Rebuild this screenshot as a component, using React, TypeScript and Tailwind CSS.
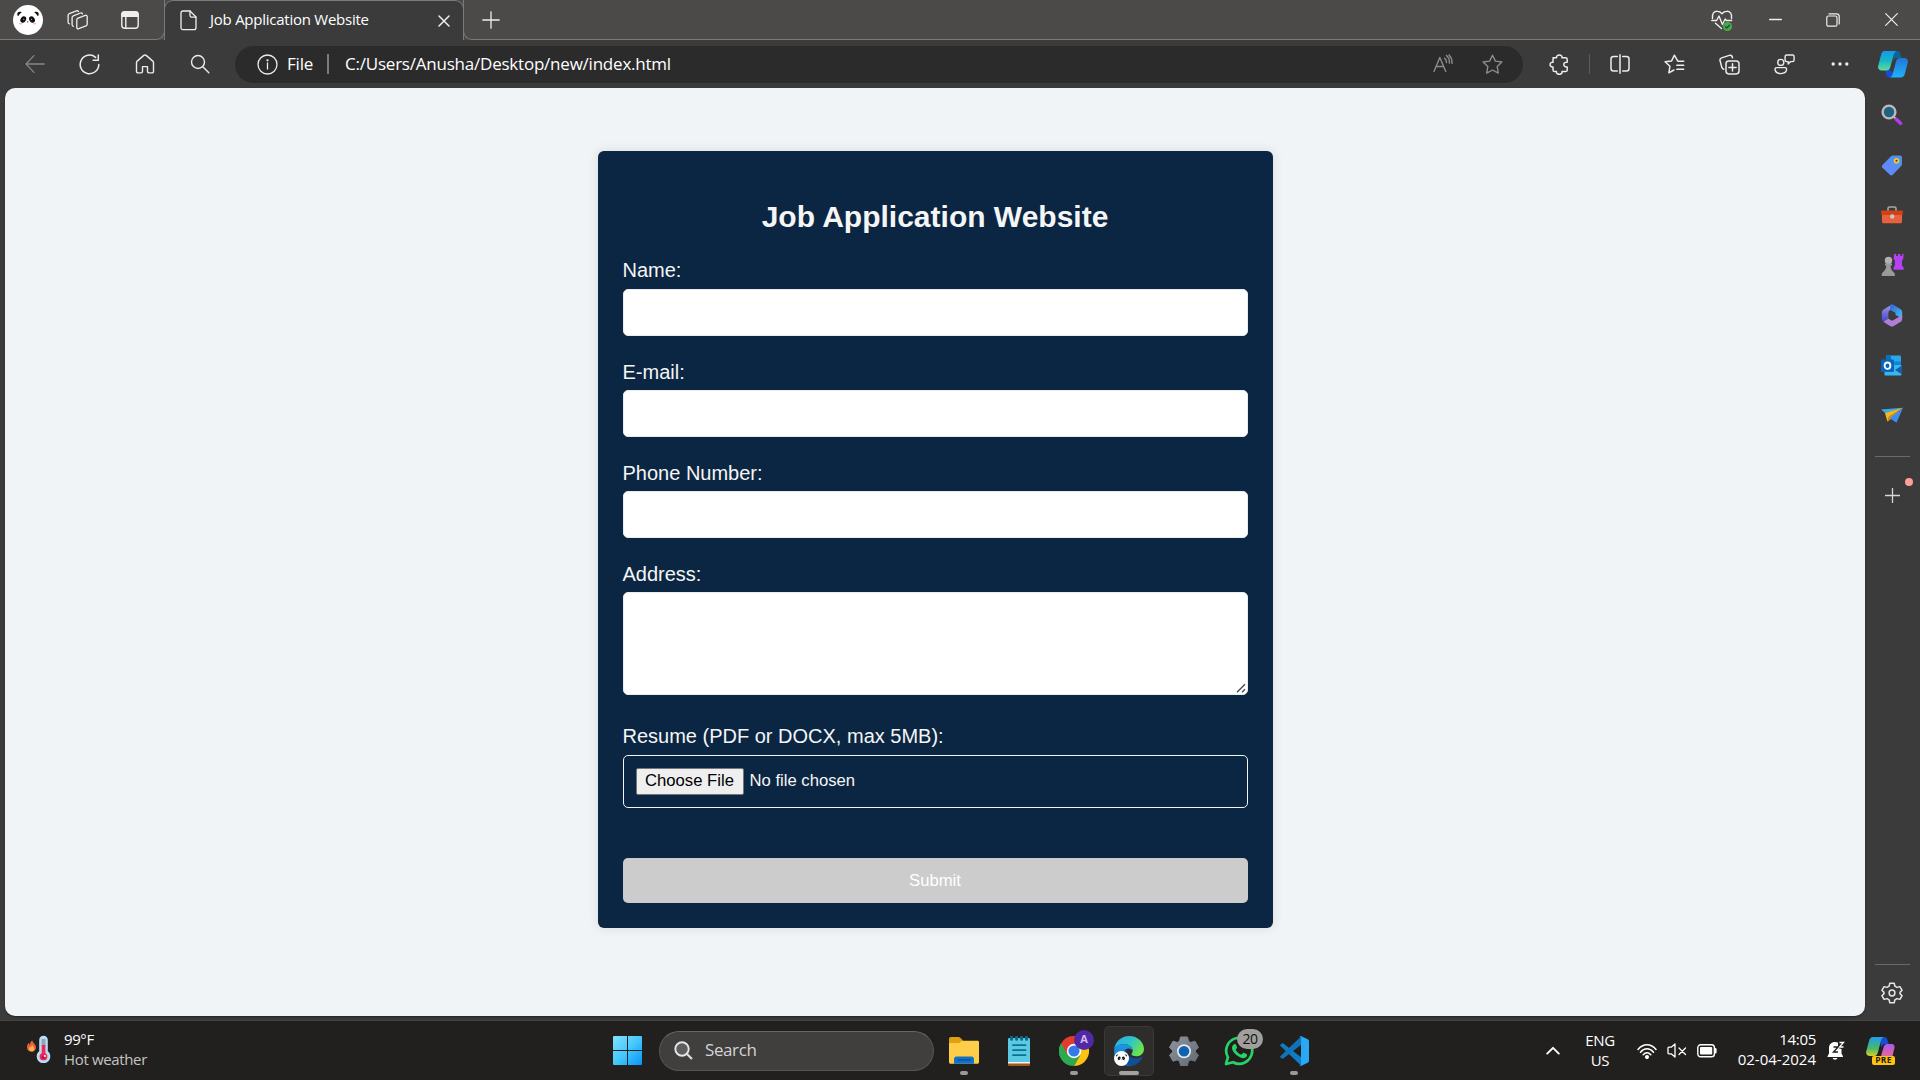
import React from "react";

type IconProps = {
  w?: number;
  h?: number;
  className?: string;
  sw?: number;
  children: React.ReactNode;
};

function Icon({ w = 20, h = 20, className = "", sw = 1.3, children }: IconProps) {
  return (
    <svg
      width={w}
      height={h}
      viewBox={`0 0 ${w} ${h}`}
      fill="none"
      stroke="currentColor"
      strokeWidth={sw}
      strokeLinecap="round"
      strokeLinejoin="round"
      className={`shrink-0 ${className}`}
    >
      {children}
    </svg>
  );
}

function Panda({ size, className = "" }: { size: number; className?: string }) {
  return (
    <svg width={size} height={size} viewBox="0 0 30 30" className={`shrink-0 ${className}`}>
      <circle cx="15" cy="15" r="15" fill="#fff" />
      <path d="M4.500 10.500C3.500 7.800 5.500 6 8.800 7.200C7.500 8 6.300 9.200 5.500 11z" fill="#111" />
      <path d="M25.500 10.500C26.500 7.800 24.500 6 21.200 7.200C22.500 8 23.700 9.200 24.500 11z" fill="#111" />
      <ellipse cx="10.300" cy="14.500" rx="2.700" ry="3.400" transform="rotate(30 10.300 14.500)" fill="#111" />
      <ellipse cx="19" cy="14.500" rx="2.700" ry="3.400" transform="rotate(-30 19 14.500)" fill="#111" />
      <circle cx="10.800" cy="14.300" r="0.500" fill="#fff" />
      <circle cx="18.500" cy="14.300" r="0.500" fill="#fff" />
      <path d="M13.800 16.600h1.800l-.9 1.100z" fill="#111" />
      <ellipse cx="7.800" cy="18.600" rx="1.700" ry="0.900" fill="#f9b4c3" />
      <ellipse cx="21.600" cy="18.600" rx="1.700" ry="0.900" fill="#f9b4c3" />
    </svg>
  );
}

function TitleBar() {
  return (
    <header className="flex h-10 shrink-0 bg-[#4b4a48] text-[#eeeeee]">
      <div className="flex h-10 w-[165px] shrink-0 items-center rounded-br-[9px] border-r border-b border-[#7c7a78] pl-[13px]">
        <Panda size={30} />
        <Icon w={22} h={22} className="ml-6">
          <path d="M10.500 9.300l7.800-2.900c1-.4 1.900.1 1.900 1.200v7.400c0 .9-.4 1.500-1.200 1.800l-7.300 2.900c-1 .4-1.900-.1-1.900-1.200V11c0-.9 0-1.400.7-1.700z" />
          <path d="M6.500 17.300c-.9 0-1.400-.6-1.400-1.500V8.600c0-.9.400-1.500 1.200-1.800L13.500 4c.9-.3 1.600 0 1.900.8" />
          <path d="M2.500 14.800c-.9 0-1.400-.6-1.400-1.500V6.400c0-.9.400-1.500 1.200-1.800L9.500 1.800c.9-.3 1.600 0 1.900.8" />
        </Icon>
        <Icon w={20} h={20} className="ml-[31px]" sw={1.400}>
          <rect x="1.800" y="1.800" width="16.400" height="16.400" rx="3" />
          <path d="M2 6.200V4.500C2 3 3 2 4.500 2h11C17 2 18 3 18 4.500v1.700z" fill="currentColor" />
          <path d="M5.800 6.500v11.500" />
        </Icon>
      </div>
      <div className="-ml-px flex h-[41px] w-[300px] shrink-0 items-center rounded-t-[9px] border-x border-t border-[#7c7a78] bg-[#3b3b3b] pl-[15px]">
        <Icon w={17} h={21} className="-mt-px">
          <path d="M3 1h7l6 6v10.500c0 1.400-.8 2.200-2 2.200H3c-1.200 0-2-.8-2-2V3c0-1.200.8-2 2-2z" />
          <path d="M10 1v4.500c0 1 .6 1.600 1.600 1.600H16" />
        </Icon>
        <span className="-mt-[3px] ml-[13px] w-[228px] text-[15px] tracking-[-0.25px] whitespace-nowrap text-white">Job Application Website</span>
        <Icon w={12} h={12} sw={1.500} className="-mt-px">
          <path d="M1 1l10 10M11 1L1 11" />
        </Icon>
      </div>
      <div className="-ml-px flex h-10 flex-1 items-center rounded-bl-[9px] border-b border-l border-[#7c7a78] pl-[18px]">
        <Icon w={18} h={18} sw={1.300}>
          <path d="M9 .8v16.400M.8 9h16.400" />
        </Icon>
        <div className="flex-1" />
        <Icon w={22} h={22} className="mr-[36px] mt-[2px]" sw={1.400}>
          <path d="M1.500 8.500C.5 3.500 3.500 1 6.300 1.200C8.500 1.300 10 2.500 11 3.700C12 2.500 13.500 1.300 15.700 1.200C18.500 1 21.500 3.500 20.500 8.500" />
          <path d="M.8 10.500h4.800l2.400-4.500 3.400 8.500 2.800-5.500 1.200 1.500h5.300M4.500 13.200l6 5.300" />
          <circle cx="16.500" cy="16.500" r="4.600" fill="#4aa84e" stroke="none" />
          <path d="M14.500 16.700l1.400 1.300 2.600-2.800" stroke="#2d4a2e" />
        </Icon>
        <Icon w={13} h={14} sw={1.300} className="mr-[44px]">
          <path d="M.6 6.500h11.800" />
        </Icon>
        <Icon w={14} h={14} sw={1.200} className="mr-[45px]">
          <rect x=".8" y="3" width="10.200" height="10.200" rx="1.500" />
          <path d="M3 .8h7.500c1.600 0 2.700 1.200 2.700 2.700V11" />
        </Icon>
        <Icon w={13} h={13} sw={1.200} className="mr-[22px]">
          <path d="M.7.7l11.600 11.600M12.300.7L.7 12.300" />
        </Icon>
      </div>
    </header>
  );
}

function ToolCell({ children }: { children: React.ReactNode }) {
  return <div className="flex w-[55px] shrink-0 justify-center">{children}</div>;
}

function Toolbar() {
  return (
    <div className="flex h-12 shrink-0 items-center bg-[#3b3b3b] text-[#ececec]">
      <div className="flex w-[235px] shrink-0 items-center pl-[7px]">
        <ToolCell>
          <Icon className="-mt-px text-[#868686]">
            <path d="M19.300 10H1M9 1.600L1 10l8 8.400" />
          </Icon>
        </ToolCell>
        <ToolCell>
          <Icon w={21} h={21} sw={1.500}>
            <path d="M19.800 10.500a9.300 9.300 0 1 1-3.200-7.100M19.300 1v5.200h-5.200" />
          </Icon>
        </ToolCell>
        <ToolCell>
          <Icon sw={1.400}>
            <path d="M1.500 8.800c0-.7.200-1.200.7-1.700L8.800 1.400c.8-.6 1.600-.6 2.400 0l6.600 5.700c.5.500.7 1 .7 1.700v8.600c0 .9-.6 1.500-1.500 1.500h-3.200c-.8 0-1.300-.5-1.300-1.300v-5H7.500v5c0 .8-.5 1.300-1.300 1.300H3c-.9 0-1.500-.6-1.500-1.500z" />
          </Icon>
        </ToolCell>
        <ToolCell>
          <Icon sw={1.400}>
            <circle cx="8" cy="8" r="6.500" />
            <path d="M12.800 12.800l6 6" />
          </Icon>
        </ToolCell>
      </div>
      <div className="flex h-[37px] w-[1288px] shrink-0 items-center rounded-full bg-[#2b2b2b] pl-[22px]">
        <Icon w={21} h={21} sw={1.300}>
          <circle cx="10.500" cy="10.500" r="9.500" />
          <path d="M10.500 9v6" />
          <circle cx="10.500" cy="6.300" r=".5" fill="currentColor" />
        </Icon>
        <span className="-mt-px ml-[9px] w-[40px] text-[17px] tracking-[-0.2px] text-white">File</span>
        <div className="h-5 w-[2px] bg-[#7b7b7b]" />
        <span className="-mt-px ml-4 flex-1 text-[17px] tracking-[-0.22px] whitespace-nowrap text-white">C:/Users/Anusha/Desktop/new/index.html</span>
        <Icon w={20} h={20} className="mr-[29px] text-[#8d8d8d]" sw={1.400}>
          <path d="M1 17.500L6.800 3.500l6 14M3.200 12.500h7.300M11.500 4.200c1.300.8 2 2.300 2 4.300M13.500 1.500c2 1.600 3.100 4.200 2.900 7.500M16 1c2.100 2 3.200 5 3 8.500" />
        </Icon>
        <Icon w={21} h={21} className="mr-[20px] text-[#8d8d8d]" sw={1.400}>
          <path d="M10.500 1.200l2.900 5.900 6.500.9-4.700 4.600 1.100 6.500-5.800-3.100-5.800 3.100 1.100-6.500L1.100 8l6.500-.9z" />
        </Icon>
      </div>
      <div className="flex w-[67px] shrink-0 items-center pl-[26px]">
        <Icon w={21} h={21} sw={1.500}>
          <path d="M4 3.800h3.500C7.300 1.900 8.600 1 10.300 1s3 1 2.700 2.800h3.500c1 0 1.700.7 1.700 1.700v2.800c-2-.2-3.400.6-3.400 2.300s1.400 2.500 3.400 2.300v3c0 1-.7 1.700-1.700 1.700H13c.3 1.900-1 2.700-2.700 2.700s-3-.8-2.800-2.700H5.600c-1 0-1.600-.7-1.600-1.700v-3C2.200 13.100 1.100 12.200 1.100 10.600S2.200 8.100 4 8.300V5.500c0-1 .6-1.700 1.600-1.700" />
        </Icon>
        <div className="ml-[19px] h-5 w-[2px] bg-[#5c5c5c]" />
      </div>
      <div className="flex shrink-0 items-center pl-[2px]">
        <ToolCell>
          <Icon sw={1.500}>
            <path d="M7.300 2.600H3.500C2 2.600 1 3.600 1 5v9.500C1 16 2 17 3.500 17h3.800M12.700 2.600h3.800C18 2.600 19 3.600 19 5v9.500c0 1.500-1 2.500-2.500 2.500h-3.800M10 .8v18.400" />
          </Icon>
        </ToolCell>
        <ToolCell>
          <Icon w={21} h={21} sw={1.500}>
            <path d="M19.700 7.200h-5.900L10.300 1.200 7.600 6.900l-6.500.9 4.800 4.500-1 6.500 5-2.800M12.800 11.200h6.900M12.800 15.200h6.900" />
          </Icon>
        </ToolCell>
        <ToolCell>
          <Icon w={21} h={21} sw={1.500}>
            <rect x="7" y="6.900" width="13" height="13" rx="2.800" />
            <path d="M13.500 9.800v7.200M9.900 13.400h7.200M4.800 15.200c-1-.1-1.600-.7-1.900-1.600L1.100 6.900c-.4-1.500.3-2.600 1.600-3l7.600-2.500c1.500-.5 2.600.2 3 1.500l.2.900" />
          </Icon>
        </ToolCell>
        <ToolCell>
          <Icon w={21} h={21} sw={1.400}>
            <circle cx="6.800" cy="8.400" r="3" />
            <path d="M2.500 13.600h8.600c.9 0 1.500.6 1.500 1.500 0 2.800-2.500 4.500-5.800 4.500S1 17.900 1 15.100c0-.9.600-1.500 1.500-1.500zM12.600 1h6c1 0 1.500.5 1.500 1.500v3.600c0 1-.5 1.500-1.500 1.500h-2l-2.400 2.300V7.600h-1.600c-1 0-1.500-.5-1.500-1.500V2.500c0-1 .5-1.500 1.500-1.500z" />
          </Icon>
        </ToolCell>
        <ToolCell>
          <Icon w={18} h={6} sw={0}>
            <circle cx="2.200" cy="3" r="1.700" fill="currentColor" />
            <circle cx="9" cy="3" r="1.700" fill="currentColor" />
            <circle cx="15.800" cy="3" r="1.700" fill="currentColor" />
          </Icon>
        </ToolCell>
      </div>
      <svg width="30" height="27" viewBox="0 0 30 27" className="ml-[11px] shrink-0">
        <defs>
          <linearGradient id="cpA" x1="0" y1="0" x2="0" y2="1">
            <stop offset="0" stopColor="#1599e8" />
            <stop offset=".5" stopColor="#16b6c8" />
            <stop offset="1" stopColor="#62dc98" />
          </linearGradient>
          <linearGradient id="cpB" x1="0" y1="0" x2="0" y2="1">
            <stop offset="0" stopColor="#2474d8" />
            <stop offset="1" stopColor="#1db4fa" />
          </linearGradient>
        </defs>
        <path d="M15 0h4c2 0 3 1.200 3.500 3l1.100 4h-4.500c-2.300 0-3 1-3.600 3z" fill="#0b6396" />
        <path d="M7.500 19H12l3 3-1.500 4.500H11c-1.500 0-2.500-1-3-3z" fill="#1a4bd8" />
        <path d="M6.500 0H19c-2 .5-2.800 2-3.500 4.500L12.300 16c-.6 2.200-1.500 3.500-4 3.500H4C1 19.500-.5 17.500.3 14.500L3 4c.7-2.500 1.800-4 3.500-4z" fill="url(#cpA)" />
        <path d="M22 7h4.500c2.700 0 3.900 2 3.200 4.800L27 22.200c-.8 2.900-2 4.300-4.500 4.300h-11c1.700-.3 2.600-1.500 3.200-3.800L18 10.500C18.700 8.200 19.700 7 22 7z" fill="url(#cpB)" />
      </svg>
    </div>
  );
}

function SideCell({ children }: { children: React.ReactNode }) {
  return <div className="flex h-[50px] w-full shrink-0 items-center justify-center">{children}</div>;
}

function Sidebar() {
  return (
    <aside className="flex w-[55px] shrink-0 flex-col items-center pt-[2px] pr-px text-[#d8d8d8]">
      <SideCell>
        <svg width="22" height="22" viewBox="0 0 22 22">
          <path d="M12.500 12.500l3 3" stroke="#b9b9b9" strokeWidth="2" />
          <path d="M15.300 15.300l4.200 4" stroke="#b23bea" strokeWidth="3.600" strokeLinecap="round" />
          <circle cx="8" cy="8" r="6.400" fill="#206284" stroke="#bdbab6" strokeWidth="2.400" />
        </svg>
      </SideCell>
      <SideCell>
        <svg width="22" height="22" viewBox="0 0 22 22">
          <defs>
            <linearGradient id="tag" x1="1" y1="0" x2="0" y2="1">
              <stop offset="0" stopColor="#4a92ea" />
              <stop offset="1" stopColor="#6a86ff" />
            </linearGradient>
          </defs>
          <path d="M12 1.500h7c1.300 0 2 .7 2 2V10c0 .8-.2 1.400-.8 2l-8.400 8.800c-.9.900-2 .9-2.900 0L1.500 13.800c-.9-.9-.9-2 0-2.900L10 2.300c.6-.6 1.200-.8 2-.8z" fill="url(#tag)" />
          <circle cx="15.500" cy="6.800" r="2.800" fill="#f5cc24" />
          <circle cx="15.500" cy="6.800" r="1" fill="#3a3a3a" />
        </svg>
      </SideCell>
      <SideCell>
        <svg width="22" height="20" viewBox="0 0 22 20">
          <path d="M7 6V3.500C7 2.500 7.500 2 8.500 2h5c1 0 1.500.5 1.500 1.500V6" fill="none" stroke="#a7a7a7" strokeWidth="1.600" />
          <path d="M1 9h20v7.500c0 1.200-.6 1.800-1.800 1.800H2.800C1.600 18.300 1 17.700 1 16.500z" fill="#e8613c" />
          <path d="M1.200 5.500h19.600c.6 0 1 .4 1 1V10H.2V6.500c0-.6.400-1 1-1z" fill="#d24113" />
          <circle cx="11.200" cy="11.500" r="2.200" fill="#c8c8c8" />
        </svg>
      </SideCell>
      <SideCell>
        <svg width="23" height="24" viewBox="0 0 23 24">
          <path d="M13 1h2.200v2h1.800V1h2.400v2h1.700V1h1.600l-.5 5.200-1.200 1v5.300l1.700 2.200v2H12.500v-2.200l1.400-2V7.200l-1.200-1z" fill="#b442f2" />
          <circle cx="7.500" cy="7.500" r="3.700" fill="#b2b2b2" />
          <path d="M4 10.500h7v2H9.600c0 2.500.6 4.500 3.300 7 .8.800 1 1.500 1 3.500H.7c0-2 .2-2.700 1-3.500 2.700-2.500 3.600-4.500 3.600-7H4z" fill="#9a9a9a" />
        </svg>
      </SideCell>
      <SideCell>
        <svg width="22" height="23" viewBox="0 0 22 23">
          <defs>
            <linearGradient id="mA" x1="0" y1="0" x2="0" y2="1">
              <stop offset="0" stopColor="#a894e8" />
              <stop offset="1" stopColor="#3c48c8" />
            </linearGradient>
            <linearGradient id="mB" x1="0" y1="0" x2="1" y2="1">
              <stop offset="0" stopColor="#2f63d8" />
              <stop offset="1" stopColor="#46c3ee" />
            </linearGradient>
          </defs>
          <path d="M10 1L3 5.200C1.500 6 .8 7 .8 8.800v5.600c0 1.500.5 2.500 1.600 3.200l5-3V9.500c0-2 .5-2.800 2-3.600L12 4V.8c-.7-.2-1.300-.2-2 .2z" fill="url(#mA)" />
          <path d="M9.200.9c1-.5 2.400-.5 3.500.2l6.600 4c1.400.9 1.900 1.900 1.900 3.600v5.500L14.500 11V8.800L9 6z" fill="url(#mB)" />
          <path d="M21.200 12.300v2.400c0 1.500-.6 2.500-1.900 3.300l-6.500 4c-1.300.8-2.500.8-3.800 0l-6.700-4.200 5-3.200 2.600 1.600c.9.500 1.500.5 2.400 0l6.600-4c1-.7 1.600-1.200 2.300.1z" fill="#b07ed8" />
        </svg>
      </SideCell>
      <SideCell>
        <svg width="22" height="21" viewBox="0 0 22 21">
          <rect x="5" y=".5" width="15" height="12" rx="1" fill="#28a8ea" />
          <path d="M5 .5h5v6H5z" fill="#0e6fbe" />
          <path d="M10 6.500h10v5H10z" fill="#1484d2" />
          <path d="M3.500 10h17v9.500c0 .8-.4 1-1 1H4.500c-.6 0-1-.4-1-1z" fill="#35b8f1" />
          <path d="M21 10.500v9L14 15z" fill="#145f9f" />
          <rect x="0" y="4.500" width="13" height="12.500" rx="1.200" fill="#0a64b8" />
          <ellipse cx="6.500" cy="10.700" rx="2.900" ry="3.200" fill="none" stroke="#fff" strokeWidth="1.800" />
        </svg>
      </SideCell>
      <SideCell>
        <svg width="22" height="17" viewBox="0 0 22 17">
          <path d="M0 2.600L22 .8 6 7.500z" fill="#42a9e8" />
          <path d="M4 6.300L22 .8 8 9.800 6.500 14.800z" fill="#f6b91c" />
          <path d="M8 9.800L22 .8 10.500 11.600 6.500 14.800z" fill="#e18f13" />
          <path d="M22 .8L15.500 15.800 8.800 11.300z" fill="#3d8df0" />
        </svg>
      </SideCell>
      <div className="mt-4 h-px w-[35px] shrink-0 bg-[#6a6a6a]" />
      <div className="relative mt-[31px] flex h-[15px] w-full justify-center">
        <Icon w={15} h={15} sw={1.300}>
          <path d="M7.500.5v14M.5 7.500h14" />
        </Icon>
        <div className="absolute -top-[10px] right-[6px] h-2 w-2 rounded-full bg-[#ff9e98]" />
      </div>
      <div className="flex-1" />
      <div className="h-px w-[35px] shrink-0 bg-[#6a6a6a]" />
      <Icon w={22} h={22} sw={1.500} className="mt-[17px] mb-[16px] text-[#e6e6e6]">
        <circle cx="11" cy="11" r="2.900" />
        <path d="M8.800 1.300h4.400l.7 2.900 2.100 1.200 2.900-.8 2.200 3.700-2.100 2.100v1.200l2.100 2.100-2.200 3.700-2.900-.8-2.100 1.200-.7 2.900H8.800l-.7-2.900L6 16.600l-2.900.8-2.200-3.700L3 11.600v-1.200L.9 8.300l2.200-3.700 2.900.8 2.100-1.200z" />
      </Icon>
    </aside>
  );
}

function Field({ label, first }: { label: string; first?: boolean }) {
  return (
    <div className="mb-[25px]">
      <label className={`block text-[20px] leading-[23px] ${first ? "-mt-px h-[30px]" : "h-[29px]"}`}>{label}</label>
      <input className="block h-[47px] w-full rounded-[5px] border border-[#e8ecef] bg-white" />
    </div>
  );
}

function JobForm() {
  return (
    <form className="mt-[63px] h-[777px] w-[675px] rounded-[6px] bg-[#0b2643] px-[25px] font-['Liberation_Sans',sans-serif] text-[#f5f5f5] shadow-[0_0_12px_rgba(0,0,0,0.1)]">
      <h1 className="mt-[48px] text-center text-[30px] leading-[36px] font-bold">Job Application Website</h1>
      <div className="mt-[25px]">
        <Field label="Name:" first />
        <Field label="E-mail:" />
        <Field label="Phone Number:" />
        <label className="block h-[29px] text-[20px] leading-[23px]">Address:</label>
        <div className="relative">
          <textarea className="block h-[103px] w-full resize-none rounded-[5px] border border-[#e8ecef] bg-white" />
          <svg width="10" height="10" viewBox="0 0 10 10" className="absolute right-[2px] bottom-[2px]">
            <path d="M1 9.300l8-8M6 9.300L9 6.300" stroke="#4a4a4a" strokeWidth="1.400" />
          </svg>
        </div>
        <label className="mt-[30px] block h-[30px] text-[20px] leading-[23px]">Resume (PDF or DOCX, max 5MB):</label>
        <div className="flex h-[53px] w-full items-center rounded-[5px] border border-[#f2f4f6] pl-3 text-[16.67px]">
          <button type="button" className="h-[27px] w-[108px] rounded-[2px] border border-[#767676] bg-[#efefef] pb-[2px] text-center leading-[23px] whitespace-nowrap text-black">
            Choose File
          </button>
          <span className="-mt-[2px] ml-[6px] leading-[25px]">No file chosen</span>
        </div>
        <button type="button" className="mt-[50px] block h-[45px] w-full rounded-[5px] bg-[#cccccc] text-[16.67px] leading-[45px] text-white">
          Submit
        </button>
      </div>
    </form>
  );
}

function TaskCell({ children, dot }: { children: React.ReactNode; dot?: boolean }) {
  return (
    <div className="relative flex h-[50px] w-[55px] shrink-0 items-center justify-center">
      {children}
      {dot && <div className="absolute bottom-[1px] left-1/2 h-1 w-2 -translate-x-1/2 rounded-full bg-[#9a9a9a]" />}
    </div>
  );
}

function Taskbar() {
  return (
    <footer className="flex h-[60px] shrink-0 items-center border-t border-[#444342] bg-[#21201f] text-white">
      <div className="flex w-[613px] shrink-0 items-center pl-[26px]">
        <svg width="25" height="30" viewBox="0 0 25 30" className="-mt-[1px] shrink-0">
          <path d="M6.300 5.500c.2 2.400 3.700 3.500 3.700 7 0 2.600-1.900 4.300-4.500 4.300S1 15.100 1 12.500c0-2 .7-3.700 1.700-4.700.2.900.6 1.500 1.200 1.800C4 7.800 4.800 6.500 6.300 5.500z" fill="#e8603f" />
          <path d="M6.300 10c.2 1.300 2 2 2 3.700 0 1.500-1 2.600-2.600 2.600-1.500 0-2.700-1-2.700-2.500 0-1 .6-1.700 1.200-2.100.3.400.6.500.8.500.1-.8.600-1.600 1.300-2.200z" fill="#ffb24a" />
          <path d="M17.500.8c2.600 0 4.300 1.800 4.300 4.300v11.200c1.700 1.300 2.500 2.800 2.500 4.900 0 4-2.900 6.900-6.800 6.900s-6.800-2.900-6.800-6.900c0-2.100.9-3.600 2.500-4.900V5.100c0-2.500 1.700-4.300 4.300-4.300z" fill="#b9ddf8" />
          <path d="M15.500 4h4v7h-4z" fill="#8ea6b8" />
          <path d="M15.700 10h3.700v8c1.300.8 2 1.900 2 3.400a3.900 3.900 0 0 1-7.800 0c0-1.500.8-2.600 2.100-3.400z" fill="#ee2b58" />
          <circle cx="17.600" cy="22" r="1.700" fill="#a51737" />
          <circle cx="18.800" cy="21" r="1.100" fill="#fff" />
        </svg>
        <div className="-mt-[3px] ml-[13px] text-[15px] leading-5 tracking-[-0.4px]">
          <div>99°F</div>
          <div className="tracking-[-0.35px] text-[#c4c4c4]">Hot weather</div>
        </div>
      </div>
      <svg width="29" height="29" viewBox="0 0 29 29" className="shrink-0">
        <defs>
          <linearGradient id="win" x1="0" y1="0" x2="29" y2="29" gradientUnits="userSpaceOnUse">
            <stop offset="0" stopColor="#85e0fb" />
            <stop offset=".5" stopColor="#44c8fc" />
            <stop offset="1" stopColor="#0793fb" />
          </linearGradient>
        </defs>
        <path d="M1 0h13v14H0V1a1 1 0 0 1 1-1zM15 0h13a1 1 0 0 1 1 1v13H15zM0 15h14v14H1a1 1 0 0 1-1-1zM15 15h14v13a1 1 0 0 1-1 1H15z" fill="url(#win)" />
      </svg>
      <div className="ml-[17px] flex h-10 w-[275px] shrink-0 items-center rounded-full border border-[#555453] border-t-[#676665] bg-[#403f3e] pl-[14px]">
        <svg width="19" height="19" viewBox="0 0 19 19">
          <circle cx="8" cy="8" r="6.700" fill="#5e5e5e" stroke="#e4e6ea" strokeWidth="1.900" />
          <path d="M13 13l5 5" stroke="#dadde2" strokeWidth="2.200" />
        </svg>
        <span className="-mt-px ml-[12px] text-[17px] tracking-[-0.4px] text-[#d4d4d4]">Search</span>
      </div>
      <div className="flex shrink-0 items-center pl-[2px]">
        <TaskCell dot>
          <svg width="30" height="28" viewBox="0 0 30 28">
            <path d="M0 2C0 .8.800 0 2 0h7.500c.8 0 1.300.2 1.800.7L14 3.500V8H0z" fill="#e0a010" />
            <path d="M0 7.500C0 6.500.5 6 1.500 6h8c.8 0 1.200-.2 1.700-.7l.8-.8c.5-.5.900-.7 1.700-.7h14.800c1 0 1.500.5 1.500 1.500V25c0 1.200-.6 1.800-1.800 1.800H1.800C.6 26.800 0 26.200 0 25z" fill="#ffce48" />
            <path d="M5 26.800V22c0-1.700 1-2.600 2.500-2.600h15c1.500 0 2.500.9 2.500 2.600v4.800z" fill="#1272c8" />
            <path d="M9 22.800h12.500" stroke="#0a4b91" strokeWidth="1.300" strokeLinecap="round" />
          </svg>
        </TaskCell>
        <TaskCell>
          <svg width="22" height="30" viewBox="0 0 22 30">
            <path d="M0 24h22v4.500c0 1-.5 1.500-1.500 1.500h-19C.5 30 0 29.500 0 28.500z" fill="#a9541c" />
            <path d="M0 23h22v4.500H0z" fill="#f2f2f2" />
            <path d="M1.500 2h19c1 0 1.500.5 1.500 1.500V26H0V3.500C0 2.500.5 2 1.500 2z" fill="#5bc8e4" />
            <path d="M3.600 1.200v2M8.600 1.200v2M13.600 1.200v2M18.500 1.200v2" stroke="#0c6c88" strokeWidth="3" strokeLinecap="round" />
            <path d="M5 9.200h12.500M5 14.200h12.500M5 19.200h12.500" stroke="#0a7390" strokeWidth="1.800" strokeLinecap="round" />
          </svg>
        </TaskCell>
        <TaskCell dot>
          <svg width="30" height="30" viewBox="0 0 30 30">
            <path d="M15 15L2 7.500A15 15 0 0 1 28 7.500z" fill="#e33b2e" />
            <path d="M15 15L2 7.500A15 15 0 0 0 15 30l6.500-11.300z" fill="#2da94f" />
            <path d="M15 15l13-7.500A15 15 0 0 1 15 30l6.500-11.300z" fill="#fdc313" />
            <path d="M15 8h13.300L27 14l-6 5z" fill="#fdc313" />
            <path d="M2 7.500l6.500 11.300L15 15l-1-6z" fill="#e33b2e" />
            <path d="M2 7.500l6.500 11.300 6.500 3-3 8A15 15 0 0 1 2 7.500z" fill="#2da94f" />
            <circle cx="15" cy="15" r="7.200" fill="#fff" />
            <circle cx="15" cy="15" r="5.600" fill="#3478ea" />
          </svg>
          <div className="absolute top-[4px] left-[28px] flex h-5 w-5 items-center justify-center rounded-full bg-[#5128a5] text-[11px] font-bold text-[#cfbcf3]">A</div>
        </TaskCell>
        <div className="relative flex h-[50px] w-[55px] shrink-0 items-center justify-center">
          <div className="flex h-[50px] w-[50px] items-center justify-center rounded-[5px] border border-[#3a3938] bg-[#2e2d2c]">
            <svg width="30" height="30" viewBox="0 0 30 30">
              <defs>
                <linearGradient id="edA" x1="0" y1="0" x2="1" y2=".5">
                  <stop offset="0" stopColor="#2aa8ea" />
                  <stop offset=".55" stopColor="#2fc3c8" />
                  <stop offset="1" stopColor="#6be34e" />
                </linearGradient>
                <linearGradient id="edB" x1="0" y1="0" x2="0" y2="1">
                  <stop offset="0" stopColor="#1a9be4" />
                  <stop offset="1" stopColor="#1268c0" />
                </linearGradient>
              </defs>
              <path d="M0 14C1 5.500 7.500 0 15 0c9 0 15 6.500 15 13 0 4.500-3.500 7.300-7.500 7.300-3 0-5-1-5-2.300 0-.8 1.200-1.300 1.200-3.300C18.700 11 14.500 8 10 8 5 8 1.500 10.500 0 14z" fill="url(#edA)" />
              <path d="M0 15.500C.3 10.800 4.500 8 9.500 8c5 0 9.200 2.800 9.200 6.700-.9-1.500-2.400-2.300-4.200-2.300-3 0-5 3.200-5 6.500 0 5 4 9.800 9.500 10.500A15 15 0 0 1 0 15.500z" fill="url(#edB)" />
              <path d="M9.500 18.500c0-2.500 1.300-4.800 3-5.700-.8 5 3.500 9.400 9 9.400 2.500 0 4.500-.5 6-1.300.6-.3 1 .2.700.8C26 26.500 21 30 16 30c-4-1.500-6.500-7-6.500-11.500z" fill="#104e96" />
            </svg>
          </div>
          <Panda size={15} className="absolute top-[25px] left-[13px]" />
          <div className="absolute bottom-[1px] left-[18px] h-1 w-5 rounded-full bg-[#a3a2a1]" />
        </div>
        <TaskCell>
          <svg width="30" height="30" viewBox="0 0 30 30">
            <defs>
              <linearGradient id="gear" x1="0" y1="0" x2="1" y2="1">
                <stop offset="0" stopColor="#8d949e" />
                <stop offset="1" stopColor="#626a75" />
              </linearGradient>
            </defs>
            <path
              d="M11.500 1h7l1 4.200 2.300 1.300 4.200-1.300L29.500 11.500 26.500 14.400v1.800l3 2.900L26 25.200l-4.200-1.300-2.300 1.300-1 4.300h-7l-1-4.300-2.300-1.300L4 25.200.5 19.100l3-2.900v-1.800l-3-2.900L4 5.200l4.200 1.300 2.300-1.300z"
              fill="url(#gear)"
              stroke="url(#gear)"
              strokeWidth="1"
              strokeLinejoin="round"
            />
            <circle cx="15" cy="15.200" r="7" fill="#e6e9ee" />
            <circle cx="15" cy="15.200" r="5.300" fill="#0f63b0" />
          </svg>
        </TaskCell>
        <TaskCell>
          <svg width="30" height="30" viewBox="0 0 30 30">
            <path d="M2 28l1.900-6.800A13 13 0 1 1 9 26.200z" fill="none" stroke="#25d366" strokeWidth="2.700" strokeLinejoin="round" />
            <path d="M10 8.200c.7-.4 1.500-.4 1.900.4l1 2.300c.3.700 0 1.200-.9 2.300-.3.300-.3.600 0 1 1.200 2 2.700 3.300 4.800 4.300.4.200.7.100 1-.2 1.100-1.400 1.400-1.800 2.100-1.500l2.500 1.200c.7.300.7.800.6 1.400-.3 1.700-2 2.800-3.700 2.800-3.700-.2-10.900-5-11.300-10.300 0-1.600 1-3.100 2-3.700z" fill="#25d366" />
          </svg>
          <div className="absolute top-[3px] left-[26px] flex h-5 w-[26px] items-center justify-center rounded-full bg-[#a09f9d] text-[14px] tracking-[-0.6px] text-[#111]">20</div>
        </TaskCell>
        <TaskCell dot>
          <svg width="30" height="30" viewBox="0 0 30 30">
            <path d="M.8 9.300l2-1.800c.5-.4 1-.4 1.500 0L22.500 21.500V30z" fill="#0f7cc4" />
            <path d="M.8 20.700l2 1.800c.5.400 1 .4 1.500 0L22.500 8.500V0z" fill="#1272b8" />
            <path d="M21.800 0l7 3.200c.8.400 1.200 1 1.200 1.800v20c0 .8-.4 1.400-1.200 1.800l-7 3.200c-.8.300-1.600.1-2.200-.5 1 .8 2.400.2 2.400-1.200V1.700C22 .4 20.700-.3 19.600.5c.6-.6 1.400-.8 2.200-.5z" fill="#29a8f3" />
          </svg>
        </TaskCell>
      </div>
      <div className="flex-1" />
      <div className="flex shrink-0 items-center">
        <Icon w={14} h={9} sw={1.900}>
          <path d="M1.200 7.600L7 1.800l5.800 5.800" />
        </Icon>
        <div className="-mt-[2px] ml-[23px] w-[34px] text-center text-[15px] leading-5 tracking-[-0.4px]">
          <div>ENG</div>
          <div>US</div>
        </div>
        <Icon w={20} h={16} sw={1.500} className="ml-[20px]">
          <path d="M1 6.500C6 .1 14 .1 19 6.500M3.500 9.200c3.700-4.600 9.300-4.600 13 0M6.200 11.700c2.200-2.600 5.400-2.600 7.600 0" />
          <circle cx="10" cy="14" r="1.300" fill="currentColor" />
        </Icon>
        <Icon w={20} h={15} sw={1.300} className="ml-[10px]">
          <path d="M1 5v5c0 .5.300.8.800.8h2.400L8 14V1L4.200 4.200H1.800C1.300 4.200 1 4.500 1 5zM12 5l6.500 6.500M18.500 5L12 11.500" />
        </Icon>
        <Icon w={21} h={14} sw={1.400} className="ml-[10px]">
          <rect x=".8" y=".8" width="16.600" height="12" rx="2.800" />
          <rect x="3" y="3" width="12.200" height="7.600" rx="1" fill="currentColor" stroke="none" />
          <path d="M18.500 5.200v3.200" strokeWidth="2.200" />
        </Icon>
        <div className="-mt-[3px] ml-[14px] w-[84px] text-right text-[15px] leading-5">
          <div className="tracking-[-0.3px]">14:05</div>
          <div>02-04-2024</div>
        </div>
        <svg width="18" height="20" viewBox="0 0 18 20" className="ml-[11px] shrink-0">
          <path d="M8 1c-3.500 0-6 2.500-6 6v5.500L.5 15.300c-.2.500 0 .8.500.8h14.500c.5 0 .7-.3.500-.8L14.500 12.500V8L11 7V1.500C10 1.200 9 1 8 1zM5.500 17a2.700 2.700 0 0 0 5 0z" fill="#fff" />
          <path d="M6.500 6h4.500l-4.500 5h4.500" fill="none" stroke="#21201f" strokeWidth="1.400" />
          <path d="M12.500 1.500h4l-4 4.500h4" fill="none" stroke="#fff" strokeWidth="1.300" />
        </svg>
        <div className="relative mr-[25px] ml-[21px] h-[30px] w-[29px]">
          <svg width="29" height="22" viewBox="0 0 29 22">
            <defs>
              <linearGradient id="pA" x1="0" y1="0" x2="0" y2="1">
                <stop offset="0" stopColor="#1f9cf0" />
                <stop offset=".6" stopColor="#49b868" />
                <stop offset="1" stopColor="#d4cf2a" />
              </linearGradient>
              <linearGradient id="pB" x1="0" y1="0" x2="0" y2="1">
                <stop offset="0" stopColor="#a45cf0" />
                <stop offset="1" stopColor="#f0688a" />
              </linearGradient>
            </defs>
            <path d="M14 1h4c2 0 3 1 3.500 3l1.200 4H18l-3 3z" fill="#1a4bd0" />
            <path d="M7 1h11c-1.800.5-2.600 2-3.300 4.500L12 16c-.6 2.200-1.500 4-4 4H4C1 20-.4 18 .3 15L3 5C3.700 2.500 5 1 7 1z" fill="url(#pA)" />
            <path d="M21 8h4.500c2.500 0 3.500 1.800 2.900 4.300L26.500 20l-12 2 3-10.500C18.200 9.200 19 8 21 8z" fill="url(#pB)" />
          </svg>
          <div className="absolute top-[20px] left-[6px] flex h-[9px] w-[23px] items-center justify-center rounded-[2px] bg-[#fec20f] text-[8.500px] leading-none font-bold tracking-[0.3px] text-[#222]">PRE</div>
        </div>
      </div>
    </footer>
  );
}

export default function App() {
  return (
    <div className="flex h-[1080px] w-[1920px] flex-col overflow-hidden bg-[#3b3b3b] font-['Open_Sans','Noto_Sans',sans-serif]">
      <TitleBar />
      <Toolbar />
      <div className="flex min-h-0 flex-1 pl-[5px]">
        <main className="mb-[4px] flex flex-1 items-start justify-center rounded-[10px] bg-[#f0f4f7] shadow-[0_1px_2px_rgba(0,0,0,0.4)]">
          <JobForm />
        </main>
        <Sidebar />
      </div>
      <Taskbar />
    </div>
  );
}
